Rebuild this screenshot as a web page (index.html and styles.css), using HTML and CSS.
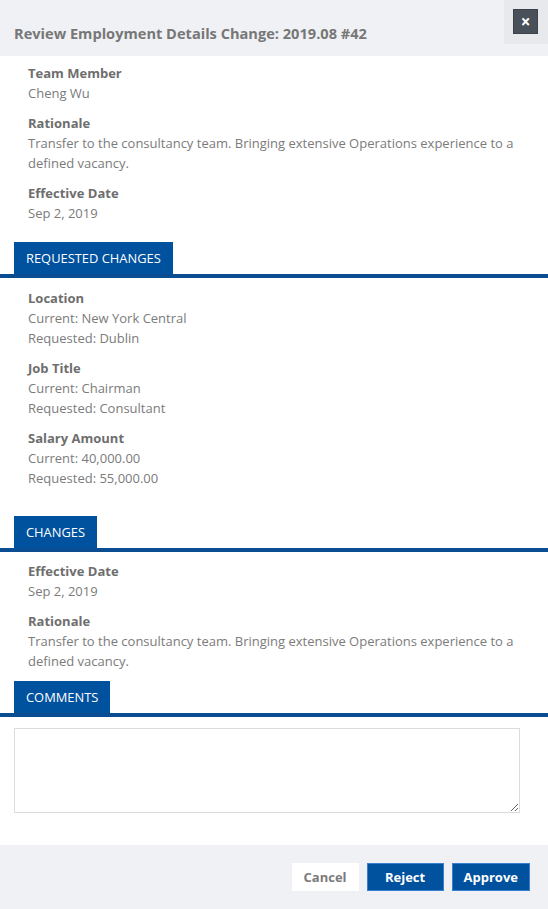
FILE: index.html
```html
<!DOCTYPE html>
<html>

<head>
    <title>Review Employment Details Change</title>
    <link rel="stylesheet" href="styles.css">
</head>

<body>
    <div class="modal">
        <div class="modal-header">
            <h1>Review Employment Details Change: 2019.08 #42</h1>
            <div class="close-wrap">
                <button class="btn-close">&times;</button>
            </div>
        </div>

        <div class="modal-body">
            <div class="details details-top">
                <div class="field">
                    <div class="field-label">Team Member</div>
                    <div class="field-value">Cheng Wu</div>
                </div>
                <div class="field">
                    <div class="field-label">Rationale</div>
                    <div class="field-value">Transfer to the consultancy team. Bringing extensive Operations experience to a defined vacancy.</div>
                </div>
                <div class="field">
                    <div class="field-label">Effective Date</div>
                    <div class="field-value">Sep 2, 2019</div>
                </div>
            </div>

            <div class="section-tab"><span>Requested Changes</span></div>
            <div class="details details-requested">
                <div class="field">
                    <div class="field-label">Location</div>
                    <div class="field-value">Current: New York Central</div>
                    <div class="field-value">Requested: Dublin</div>
                </div>
                <div class="field">
                    <div class="field-label">Job Title</div>
                    <div class="field-value">Current: Chairman</div>
                    <div class="field-value">Requested: Consultant</div>
                </div>
                <div class="field">
                    <div class="field-label">Salary Amount</div>
                    <div class="field-value">Current: 40,000.00</div>
                    <div class="field-value">Requested: 55,000.00</div>
                </div>
            </div>

            <div class="section-tab"><span>Changes</span></div>
            <div class="details details-changes">
                <div class="field">
                    <div class="field-label">Effective Date</div>
                    <div class="field-value">Sep 2, 2019</div>
                </div>
                <div class="field">
                    <div class="field-label">Rationale</div>
                    <div class="field-value">Transfer to the consultancy team. Bringing extensive Operations experience to a defined vacancy.</div>
                </div>
            </div>

            <div class="section-tab"><span>Comments</span></div>
            <div class="comments">
                <textarea id="comments"></textarea>
            </div>
        </div>

        <div class="modal-footer">
            <button class="btn btn-cancel">Cancel</button>
            <button class="btn btn-primary">Reject</button>
            <button class="btn btn-primary">Approve</button>
        </div>
    </div>
</body>

</html>
```

FILE: styles.css
```css
:root {
    --primary: #00519e;
    --primary-line: #0b4d92;
    --header-bg: #f0f1f5;
    --label: #6e6e6e;
    --text: #7b7b7b;
    --border: #dcdcdc;
}

* {
    margin: 0;
    padding: 0;
    box-sizing: border-box;
}

body {
    width: 548px;
    font-family: 'Open Sans', 'Noto Sans', Arial, sans-serif;
    color: var(--text);
    background: white;
}

.modal-header {
    height: 56px;
    background: var(--header-bg);
    display: flex;
    justify-content: space-between;
    align-items: flex-start;
}

.modal-header h1 {
    font-size: 14.6px;
    font-weight: 700;
    color: #777;
    padding: 23px 0 0 14px;
    line-height: 20px;
}

.close-wrap {
    width: 44px;
    height: 44px;
    background: #e7e9ed;
    padding: 9px 0 0 9px;
}

.btn-close {
    width: 25px;
    height: 25px;
    background: #4a505a;
    border: 1px solid #3c414a;
    color: white;
    font-family: 'Open Sans', Arial, sans-serif;
    font-size: 17px;
    font-weight: 700;
    line-height: 21px;
    cursor: pointer;
}

.details {
    padding: 0 28px;
}

.details-top {
    padding-top: 7px;
    padding-bottom: 9px;
}

.details-requested {
    padding-top: 10px;
    padding-bottom: 18px;
}

.details-changes {
    padding-top: 9px;
}

.field {
    margin-bottom: 10px;
}

.field-label {
    font-size: 13px;
    font-weight: 700;
    line-height: 20px;
    color: var(--label);
}

.field-value {
    font-size: 13px;
    line-height: 20px;
    color: var(--text);
}

.section-tab {
    border-bottom: 4px solid var(--primary-line);
    padding-left: 14px;
}

.section-tab span {
    display: inline-block;
    height: 32px;
    line-height: 32px;
    padding: 0 12px;
    background: var(--primary);
    color: white;
    font-size: 12.9px;
    text-transform: uppercase;
}

.comments {
    padding: 11px 28px 32px 14px;
}

.comments textarea {
    display: block;
    width: 506px;
    height: 85px;
    border: 1px solid var(--border);
    resize: vertical;
    font-family: inherit;
}

.modal-footer {
    height: 64px;
    background: var(--header-bg);
    display: flex;
    justify-content: flex-end;
    align-items: flex-start;
    gap: 8px;
    padding: 18px 18px 0 0;
}

.btn {
    height: 28px;
    padding: 0 11px;
    font-family: inherit;
    font-size: 13px;
    font-weight: 700;
    cursor: pointer;
}

.btn-cancel {
    background: white;
    border: 1px solid white;
    color: #7b7b7b;
}

.btn-primary {
    min-width: 77px;
    background: var(--primary);
    border: 1px solid #3a7fd0;
    color: white;
}
```
